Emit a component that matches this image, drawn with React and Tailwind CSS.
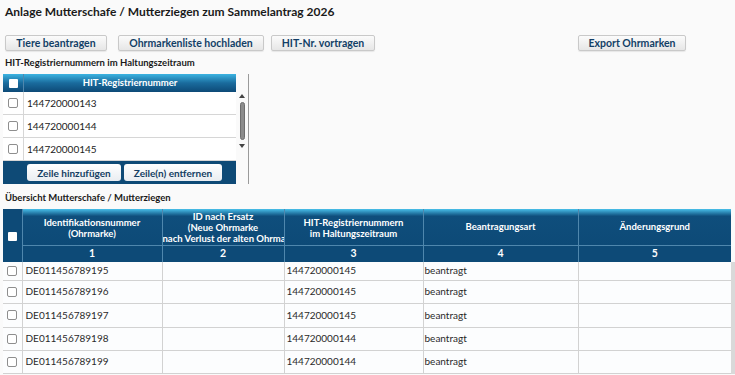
import React from 'react';

const hitRows = ['144720000143', '144720000144', '144720000145'];

const animals = [
  { id: 'DE011456789195', hit: '144720000145', h: 'h-[18px]' },
  { id: 'DE011456789196', hit: '144720000145', h: 'h-[23px]' },
  { id: 'DE011456789197', hit: '144720000145', h: 'h-[24px]' },
  { id: 'DE011456789198', hit: '144720000144', h: 'h-[23px]' },
  { id: 'DE011456789199', hit: '144720000144', h: 'h-[23px]' },
];

function GrayButton({ children, className = '' }) {
  return (
    <button
      className={`h-[16px] px-1 whitespace-nowrap rounded-[2px] border border-[#c9c9c9] bg-gradient-to-b from-[#fbfbfb] to-[#e6e6e6] text-[10.5px] font-bold leading-none text-[#123f66] shadow-[0_1px_1px_rgba(0,0,0,0.08)] ${className}`}
    >
      {children}
    </button>
  );
}

function Box({ dark }) {
  return dark ? (
    <span className="block w-[9px] h-[9px] bg-white rounded-[1px]" />
  ) : (
    <span className="block w-[10px] h-[10px] bg-white border border-[#8e8e8e] rounded-[2px]" />
  );
}

export default function App() {
  return (
    <div
      className="w-[735px] h-[375px] overflow-hidden bg-[#fafafa] text-[#222]"
      style={{ fontFamily: 'Lato, "Open Sans", sans-serif' }}
    >
      <div className="px-[5px] pt-[4px]">
        <h1 className="text-[12px] font-bold leading-[16px] text-[#1a1a1a]">
          Anlage Mutterschafe / Mutterziegen zum Sammelantrag 2026
        </h1>

        <div className="flex items-center mt-[15px] h-[16px]">
          <GrayButton className="w-[102px]">Tiere beantragen</GrayButton>
          <GrayButton className="w-[146px] ml-[11px]">Ohrmarkenliste hochladen</GrayButton>
          <GrayButton className="w-[104px] ml-[7px]">HIT-Nr. vortragen</GrayButton>
          <GrayButton className="w-[108px] ml-[203px]">Export Ohrmarken</GrayButton>
        </div>

        <div className="mt-[6px] text-[9.5px] font-bold leading-[12px] text-[#1a1a1a]">
          HIT-Registriernummern im Haltungszeitraum
        </div>
      </div>

      {/* kleine HIT-Tabelle */}
      <div className="ml-[3px] mt-[5px] flex w-[246px] border-r border-[#9a9a9a]">
        <div className="w-[234px]">
          <div className="flex h-[18px] bg-gradient-to-b from-[#3cb4e2] via-[#1a6b9d] to-[#0d4a77] text-white">
            <div className="w-[21px] flex items-center justify-center border-r border-[#4f87ad]">
              <Box dark />
            </div>
            <div className="flex-1 flex items-center justify-center text-[9.5px] font-bold">
              HIT-Registriernummer
            </div>
          </div>
          {hitRows.map((n) => (
            <div key={n} className="flex h-[23px] bg-white border-b border-[#d6d6d6]">
              <div className="w-[21px] flex items-center justify-center border-r border-[#d6d6d6]">
                <Box />
              </div>
              <div className="flex-1 flex items-center pl-[3px] text-[10px]">{n}</div>
            </div>
          ))}
          <div className="flex items-center h-[23px] bg-[#0e4a76] pl-[24px] gap-[3px]">
            <button className="h-[17px] w-[94px] whitespace-nowrap rounded-[3px] bg-gradient-to-b from-white to-[#e9edf1] text-[10px] font-bold text-[#143e63] leading-none">
              Zeile hinzufügen
            </button>
            <button className="h-[17px] w-[98px] whitespace-nowrap rounded-[3px] bg-gradient-to-b from-white to-[#e9edf1] text-[10px] font-bold text-[#143e63] leading-none">
              Zeile(n) entfernen
            </button>
          </div>
        </div>
        <div className="w-[12px] flex flex-col items-center pt-[20px]">
          <svg width="6" height="4" viewBox="0 0 6 4">
            <path d="M3 0 L6 4 L0 4 Z" fill="#444" />
          </svg>
          <div className="mt-[4px] w-[5px] h-[38px] rounded-full bg-[#8c8c8c] border border-[#6e6e6e]" />
          <svg className="mt-[4px]" width="6" height="4" viewBox="0 0 6 4">
            <path d="M0 0 L6 0 L3 4 Z" fill="#444" />
          </svg>
        </div>
      </div>

      <div className="px-[5px] mt-[8px] text-[9.5px] font-bold leading-[12px] text-[#1a1a1a]">
        Übersicht Mutterschafe / Mutterziegen
      </div>

      {/* Übersicht */}
      <div className="flex mt-[5px]">
        <table className="ml-[3px] w-[728px] table-fixed border-collapse">
          <colgroup>
            <col className="w-[19px]" />
            <col className="w-[140px]" />
            <col className="w-[122px]" />
            <col className="w-[139px]" />
            <col className="w-[155px]" />
            <col className="w-[153px]" />
          </colgroup>
          <thead className="text-white text-[9.5px] font-bold leading-[11px]">
            <tr className="h-[36px] bg-gradient-to-b from-[#49c0ea] from-0% via-[#0f4e7c] via-20% to-[#0d4a77]">
              <th rowSpan={2} className="bg-[#0d4a77] border-r border-[#4f87ad] align-middle">
                <div className="flex justify-center pt-[2px]">
                  <Box dark />
                </div>
              </th>
              <th className="border-r border-[#4f87ad] font-bold pt-[2px]">
                Identifikationsnummer
                <br />
                (Ohrmarke)
              </th>
              <th className="border-r border-[#4f87ad] font-bold overflow-hidden whitespace-nowrap pt-[1px]">
                ID nach Ersatz
                <br />
                (Neue Ohrmarke
                <br />
                nach Verlust der alten Ohrmarke)
              </th>
              <th className="border-r border-[#4f87ad] font-bold pt-[2px]">
                HIT-Registriernummern
                <br />
                im Haltungszeitraum
              </th>
              <th className="border-r border-[#4f87ad] font-bold">Beantragungsart</th>
              <th className="font-bold">Änderungsgrund</th>
            </tr>
            <tr className="h-[17px] bg-[#0d4a77] border-t border-[#4f87ad] text-[10.5px] font-bold">
              <th className="border-r border-[#4f87ad]">1</th>
              <th className="border-r border-[#4f87ad]">2</th>
              <th className="border-r border-[#4f87ad]">3</th>
              <th className="border-r border-[#4f87ad]">4</th>
              <th>5</th>
            </tr>
          </thead>
          <tbody className="text-[10px] text-[#2a2a2a]">
            {animals.map((a) => (
              <tr key={a.id} className={`${a.h} bg-[#fcfdfe] border-b border-[#d2d2d2]`}>
                <td className="border-r border-[#d2d2d2]">
                  <div className="flex justify-center">
                    <Box />
                  </div>
                </td>
                <td className="pl-[3px] border-r border-[#d2d2d2]">{a.id}</td>
                <td className="border-r border-[#d2d2d2]" />
                <td className="pl-[2px] border-r border-[#d2d2d2]">{a.hit}</td>
                <td className="pl-[1px] border-r border-[#d2d2d2]">beantragt</td>
                <td />
              </tr>
            ))}
          </tbody>
        </table>
        <div className="w-[4px] mt-[53px] bg-[#d9d9d9]" />
      </div>
    </div>
  );
}
